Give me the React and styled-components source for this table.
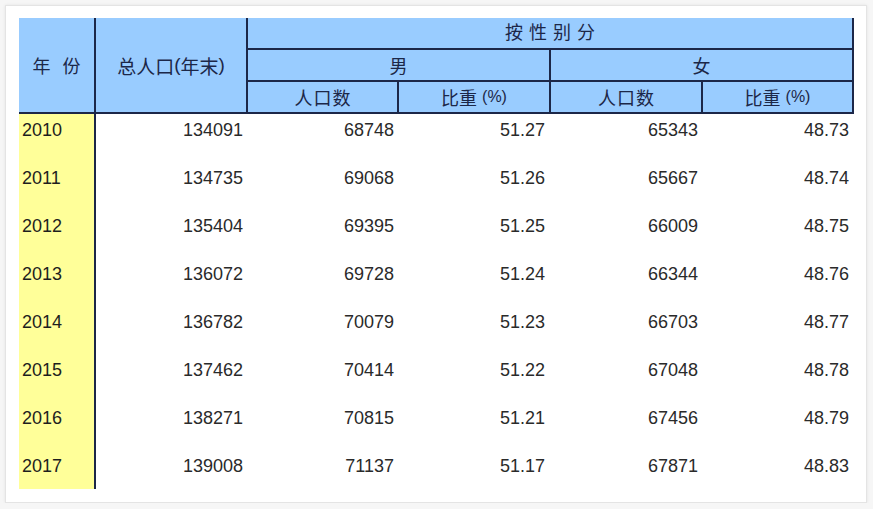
import React from "react";
import styled, { createGlobalStyle } from "styled-components";

const Global = createGlobalStyle`
  html, body { margin: 0; padding: 0; background: #f6f6f6; }
  body { font-family: "Liberation Sans", "Noto Sans CJK SC", sans-serif; }
`;

const NAVY = "#1c2748";
const BLUE = "#99ccff";
const YELLOW = "#ffff99";

const Card = styled.div`
  box-sizing: border-box;
  margin: 5px 0 0 5px;
  width: 862px;
  height: 498px;
  background: #fff;
  border: 1px solid #e4e4e4;
  box-shadow: 0 0 3px rgba(0, 0, 0, 0.08);
  padding: 12px 0 0 13px;
`;

const Grid = styled.div`
  display: grid;
  grid-template-columns: 77px 152px 151px 152px 152px 151px;
  grid-template-rows: 32px 32px 32px repeat(7, 48px) 39px;
  width: 835px;
`;

const Head = styled.div`
  box-sizing: border-box;
  grid-column: ${(p) => p.$col} / span ${(p) => p.$cs || 1};
  grid-row: ${(p) => p.$row} / span ${(p) => p.$rs || 1};
  background: ${BLUE};
  border-right: 2px solid ${NAVY};
  border-bottom: 2px solid ${NAVY};
  display: flex;
  align-items: center;
  justify-content: center;
  color: ${NAVY};
  font-family: "Noto Sans CJK SC", "Liberation Sans", sans-serif;
  font-size: ${(p) => p.$fs || 18}px;
  letter-spacing: ${(p) => p.$ls || 0}px;
  padding-left: ${(p) => p.$ls || 0}px;
  padding-bottom: ${(p) => p.$pb || 0}px;
  white-space: pre;
`;

const Paren = styled.span`
  font-family: "Liberation Sans", sans-serif;
  font-size: ${(p) => p.$fs || 18}px;
  margin-left: ${(p) => p.$ml || 0}px;
`;

const YearCell = styled.div`
  box-sizing: border-box;
  background: ${YELLOW};
  border-right: 2px solid ${NAVY};
  padding-left: 3px;
  line-height: 32px;
  font-size: 18px;
  color: #1e1e1e;
  font-family: "Liberation Sans", sans-serif;
`;

const NumCell = styled.div`
  box-sizing: border-box;
  text-align: right;
  padding-right: ${(p) => p.$pr || 4}px;
  line-height: 32px;
  font-size: 18px;
  color: #2a2a2a;
  font-family: "Liberation Sans", sans-serif;
`;

const rows = [
  ["2010", "134091", "68748", "51.27", "65343", "48.73"],
  ["2011", "134735", "69068", "51.26", "65667", "48.74"],
  ["2012", "135404", "69395", "51.25", "66009", "48.75"],
  ["2013", "136072", "69728", "51.24", "66344", "48.76"],
  ["2014", "136782", "70079", "51.23", "66703", "48.77"],
  ["2015", "137462", "70414", "51.22", "67048", "48.78"],
  ["2016", "138271", "70815", "51.21", "67456", "48.79"],
  ["2017", "139008", "71137", "51.17", "67871", "48.83"],
];

export default function App() {
  return (
    <>
      <Global />
      <Card>
        <Grid>
          <Head $col={1} $row={1} $rs={3} style={{ wordSpacing: "8px" }}>
            年 份
          </Head>
          <Head $col={2} $row={1} $rs={3} $fs={19}>
            总人口<Paren $fs={19}>(</Paren>年末<Paren $fs={19}>)</Paren>
          </Head>
          <Head $col={3} $row={1} $cs={4} $ls={6} $pb={4}>
            按性别分
          </Head>
          <Head $col={3} $row={2} $cs={2}>
            男
          </Head>
          <Head $col={5} $row={2} $cs={2}>
            女
          </Head>
          <Head $col={3} $row={3} $ls={1}>
            人口数
          </Head>
          <Head $col={4} $row={3}>
            比重<Paren $fs={16} $ml={5}>(%)</Paren>
          </Head>
          <Head $col={5} $row={3} $ls={1}>
            人口数
          </Head>
          <Head $col={6} $row={3}>
            比重<Paren $fs={16} $ml={5}>(%)</Paren>
          </Head>
          {rows.map((r) => (
            <React.Fragment key={r[0]}>
              <YearCell>{r[0]}</YearCell>
              <NumCell $pr={5}>{r[1]}</NumCell>
              <NumCell $pr={5}>{r[2]}</NumCell>
              <NumCell $pr={6}>{r[3]}</NumCell>
              <NumCell $pr={5}>{r[4]}</NumCell>
              <NumCell $pr={5}>{r[5]}</NumCell>
            </React.Fragment>
          ))}
        </Grid>
      </Card>
    </>
  );
}
